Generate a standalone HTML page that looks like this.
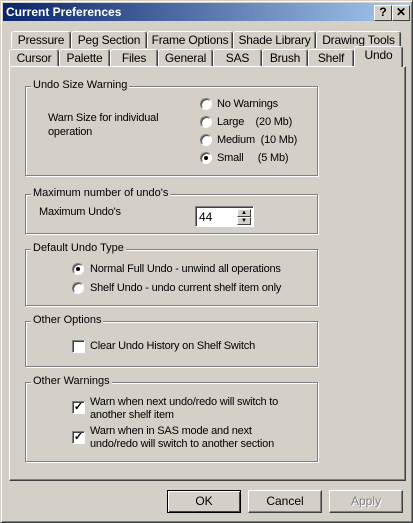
<html><head><style>
body{margin:0;width:413px;height:523px;background:#d4d0c8;font-family:"Liberation Sans",sans-serif;font-size:11px;position:relative;overflow:hidden}
.a{position:absolute}
.win{left:0;top:0;width:411px;height:521px;border:1px solid;border-color:#d4d0c8 #404040 #404040 #d4d0c8;box-shadow:inset 1px 1px #fff,inset -1px -1px #808080}
.title{left:3px;top:3px;width:407px;height:18px;background:linear-gradient(to right,#0a246a,#a6caf0);color:#fff;font-weight:bold;font-size:12px;line-height:18px;text-indent:3px}
.tb{top:2px;width:16px;height:14px;background:#d4d0c8;border:1px solid;border-color:#fff #404040 #404040 #fff;color:#000;font-weight:bold;text-align:center;line-height:13px;font-size:12px;text-indent:0}
.tab{height:17px;border:1px solid;border-color:#fff #404040 transparent #fff;border-bottom:none;border-radius:3px 3px 0 0;text-align:center;line-height:17px;font-size:12px;box-shadow:inset -1px 0 #808080;box-sizing:border-box;letter-spacing:-0.2px}
.panel{left:9px;top:66px;width:397px;height:415px;border:1px solid;border-color:#fff #404040 #404040 #fff;box-sizing:border-box;box-shadow:inset -1px -1px #808080}
.g{border:1px solid #808080;box-shadow:1px 1px #fff,inset 1px 1px #fff;box-sizing:border-box}
.gl{top:-8px;left:5px;background:#d4d0c8;padding:0 2px;font-size:11px}
.t{font-size:11px;white-space:nowrap;letter-spacing:-0.2px}
.r{width:12px;height:12px;border-radius:50%;background:#fff;box-sizing:border-box;border:1px solid;border-color:#808080 #fff #fff #808080;box-shadow:inset 1px 1px #404040}
.c{width:13px;height:13px;background:#fff;box-sizing:border-box;border:1px solid;border-color:#808080 #fff #fff #808080;box-shadow:inset 1px 1px #404040;font-size:11px;line-height:10px;text-align:center;font-weight:bold}
.btn{top:490px;width:74px;height:23px;border:1px solid;border-color:#fff #404040 #404040 #fff;box-sizing:border-box;box-shadow:inset -1px -1px #808080;text-align:center;line-height:21px;font-size:12px}
</style></head><body>
<div class="a win"></div>
<div class="a title">Current Preferences<div class="a tb" style="left:371px">?</div><div class="a tb" style="left:389px">✕</div></div>
<div class="a tab" style="left:11px;top:31px;width:60px">Pressure</div>
<div class="a tab" style="left:71px;top:31px;width:76px">Peg Section</div>
<div class="a tab" style="left:147px;top:31px;width:86px">Frame Options</div>
<div class="a tab" style="left:233px;top:31px;width:83px">Shade Library</div>
<div class="a tab" style="left:316px;top:31px;width:85px">Drawing Tools</div>
<div class="a panel"></div>
<div class="a tab" style="left:9px;top:49px;width:50px;background:#d4d0c8">Cursor</div>
<div class="a tab" style="left:59px;top:49px;width:51px;background:#d4d0c8">Palette</div>
<div class="a tab" style="left:110px;top:49px;width:48px;background:#d4d0c8">Files</div>
<div class="a tab" style="left:158px;top:49px;width:55px;background:#d4d0c8">General</div>
<div class="a tab" style="left:213px;top:49px;width:49px;background:#d4d0c8">SAS</div>
<div class="a tab" style="left:262px;top:49px;width:46px;background:#d4d0c8">Brush</div>
<div class="a tab" style="left:308px;top:49px;width:46px;background:#d4d0c8">Shelf</div>
<div class="a tab" style="left:354px;top:46px;width:49px;height:21px;background:#d4d0c8;line-height:16px">Undo</div>

<div class="a g" style="left:25px;top:86px;width:293px;height:90px"><div class="a gl">Undo Size Warning</div></div>
<div class="a t" style="left:48px;top:111px;line-height:14px">Warn Size for individual<br>operation</div>
<div class="a r" style="left:200px;top:98px"></div><div class="a t" style="left:217px;top:98px">No Warnings</div>
<div class="a r" style="left:200px;top:116px"></div><div class="a t" style="left:217px;top:116px">Large&nbsp;&nbsp;&nbsp;&nbsp;(20 Mb)</div>
<div class="a r" style="left:200px;top:134px"></div><div class="a t" style="left:217px;top:134px">Medium&nbsp;&nbsp;(10 Mb)</div>
<div class="a r" style="left:200px;top:152px"><div class="a" style="left:3px;top:3px;width:4px;height:4px;border-radius:50%;background:#000"></div></div><div class="a t" style="left:217px;top:152px">Small&nbsp;&nbsp;&nbsp;&nbsp;&nbsp;(5 Mb)</div>

<div class="a g" style="left:25px;top:194px;width:293px;height:40px"><div class="a gl">Maximum number of undo's</div></div>
<div class="a t" style="left:39px;top:206px">Maximum Undo's</div>
<div class="a" style="left:195px;top:206px;width:59px;height:21px;background:#fff;border:1px solid;border-color:#808080 #fff #fff #808080;box-sizing:border-box;box-shadow:inset 1px 1px #404040"><span class="a" style="left:3px;top:3px;font-size:12px">44</span>
<div class="a" style="left:41px;top:2px;width:14px;height:8px;background:#d4d0c8;border:1px solid;border-color:#fff #404040 #404040 #fff;box-sizing:border-box;font-size:6px;text-align:center;line-height:6px">▲</div>
<div class="a" style="left:41px;top:10px;width:14px;height:8px;background:#d4d0c8;border:1px solid;border-color:#fff #404040 #404040 #fff;box-sizing:border-box;font-size:6px;text-align:center;line-height:6px">▼</div></div>

<div class="a g" style="left:25px;top:249px;width:293px;height:57px"><div class="a gl">Default Undo Type</div></div>
<div class="a r" style="left:72px;top:263px"><div class="a" style="left:3px;top:3px;width:4px;height:4px;border-radius:50%;background:#000"></div></div><div class="a t" style="left:90px;top:263px">Normal Full Undo - unwind all operations</div>
<div class="a r" style="left:72px;top:282px"></div><div class="a t" style="left:90px;top:282px">Shelf Undo - undo current shelf item only</div>

<div class="a g" style="left:25px;top:321px;width:293px;height:46px"><div class="a gl">Other Options</div></div>
<div class="a c" style="left:72px;top:340px"></div><div class="a t" style="left:90px;top:340px">Clear Undo History on Shelf Switch</div>

<div class="a g" style="left:25px;top:382px;width:293px;height:80px"><div class="a gl">Other Warnings</div></div>
<div class="a c" style="left:72px;top:401px">✓</div><div class="a t" style="left:90px;top:396px;line-height:13px">Warn when next undo/redo will switch to<br>another shelf item</div>
<div class="a c" style="left:72px;top:431px">✓</div><div class="a t" style="left:90px;top:425px;line-height:13px">Warn when in SAS mode and next<br>undo/redo will switch to another section</div>

<div class="a btn" style="left:167px;border:1px solid #000;box-shadow:inset 1px 1px #fff,inset -1px -1px #404040">OK</div>
<div class="a btn" style="left:248px">Cancel</div>
<div class="a btn" style="left:329px;color:#808080;text-shadow:1px 1px #fff">Apply</div>
</body></html>
